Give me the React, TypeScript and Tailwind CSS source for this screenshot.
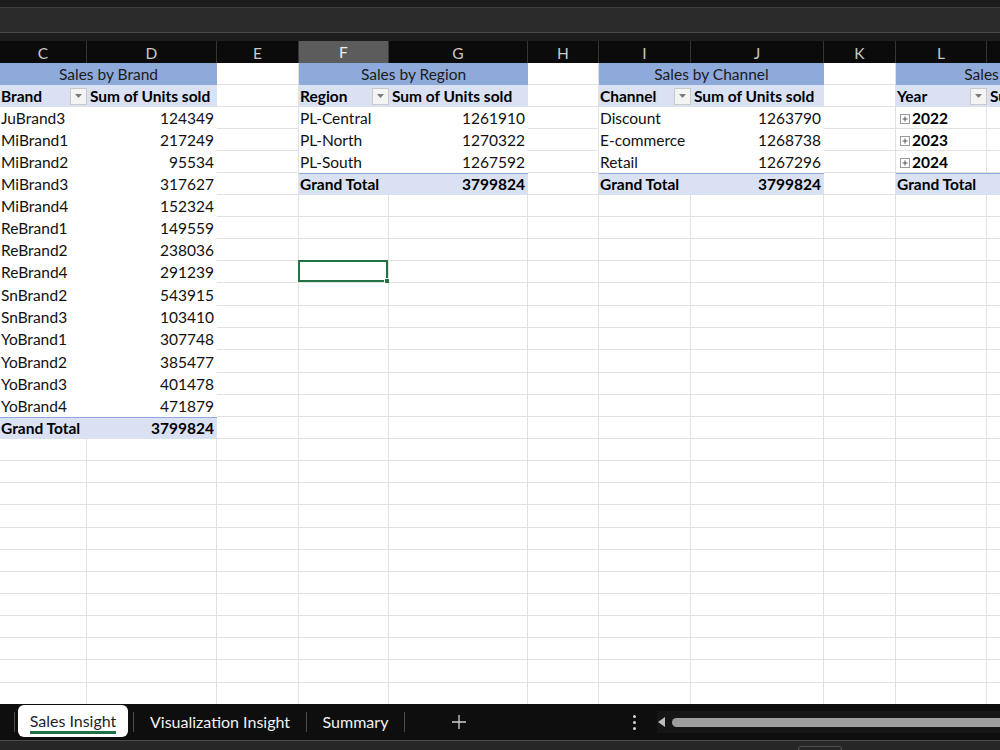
const COLS = ['C', 'D', 'E', 'F', 'G', 'H', 'I', 'J', 'K', 'L', 'M'];
const GRID = 'grid grid-cols-[87px_130px_82px_90px_139px_71px_92px_133px_72px_91px_133px]';
// Excel rounds row heights at this zoom, so a few rows are a pixel taller
const ROW_TRACKS =
  'grid-rows-[22px_22px_22px_22px_22px_22px_22px_22px_22px_22px_23px_22px_22px_23px_22px_22px_22px_22px_22px_22px_23px_22px_22px_22px_22px_22px_22px_23px_22px_22px]';
const ROWS = 30;

type Pivot = {
  col: number;
  title: string;
  head: string;
  rows: [string, string][];
  total: string;
  years?: boolean;
};

const PIVOTS: Pivot[] = [
  {
    col: 0,
    title: 'Sales by Brand',
    head: 'Brand',
    rows: [
      ['JuBrand3', '124349'],
      ['MiBrand1', '217249'],
      ['MiBrand2', '95534'],
      ['MiBrand3', '317627'],
      ['MiBrand4', '152324'],
      ['ReBrand1', '149559'],
      ['ReBrand2', '238036'],
      ['ReBrand4', '291239'],
      ['SnBrand2', '543915'],
      ['SnBrand3', '103410'],
      ['YoBrand1', '307748'],
      ['YoBrand2', '385477'],
      ['YoBrand3', '401478'],
      ['YoBrand4', '471879'],
    ],
    total: '3799824',
  },
  {
    col: 3,
    title: 'Sales by Region',
    head: 'Region',
    rows: [
      ['PL-Central', '1261910'],
      ['PL-North', '1270322'],
      ['PL-South', '1267592'],
    ],
    total: '3799824',
  },
  {
    col: 6,
    title: 'Sales by Channel',
    head: 'Channel',
    rows: [
      ['Discount', '1263790'],
      ['E-commerce', '1268738'],
      ['Retail', '1267296'],
    ],
    total: '3799824',
  },
  {
    col: 9,
    title: 'Sales by Year',
    head: 'Year',
    rows: [
      ['2022', ''],
      ['2023', ''],
      ['2024', ''],
    ],
    total: '',
    years: true,
  },
];

function FilterBtn() {
  return (
    <div className="w-[17px] h-[17px] -mt-[2px] border border-[#c9c9c9] bg-[#f4f4f4] flex items-center justify-center shrink-0">
      <svg width="7" height="4" viewBox="0 0 7 4">
        <path d="M0 0h7L3.5 4z" fill="#7b7b7b" />
      </svg>
    </div>
  );
}

function PlusBox() {
  return (
    <svg width="10" height="10" viewBox="0 0 10 10" className="mr-[2px] ml-[4px] shrink-0">
      <rect x="0.5" y="0.5" width="9" height="9" fill="#fff" stroke="#9a9a9a" />
      <path d="M2.5 5h5M5 2.5v5" stroke="#555" strokeWidth="1" />
    </svg>
  );
}

function pivotCells(p: Pivot, r: number) {
  const n = p.rows.length;
  if (r === 0) {
    return (
      <div key={`t${p.col}`} className="col-span-2 bg-[#8eaadb] flex items-center justify-center pt-[2px] text-[#1b1b1b] whitespace-nowrap">
        {p.title}
      </div>
    );
  }
  if (r === 1) {
    return [
      <div key={`h${p.col}`} className="bg-[#d9e1f2] flex items-center justify-between pl-[1px] pt-[2px] font-bold text-black">
        <span>{p.head}</span>
        <FilterBtn />
      </div>,
      <div key={`h2${p.col}`} className="bg-[#d9e1f2] flex items-center pl-[3px] pt-[2px] font-bold text-black whitespace-nowrap overflow-hidden">
        Sum of Units sold
      </div>,
    ];
  }
  if (r === n + 2) {
    return [
      <div key={`g${p.col}`} className="bg-[#d9e1f2] border-t border-[#8eaadb] flex items-center pl-[1px] font-bold text-black whitespace-nowrap">
        Grand Total
      </div>,
      <div key={`g2${p.col}`} className="bg-[#d9e1f2] border-t border-[#8eaadb] flex items-center justify-end pr-[3px] font-bold text-black">
        {p.total}
      </div>,
    ];
  }
  const [label, val] = p.rows[r - 2];
  if (p.years) {
    return [
      <div key={`d${p.col}`} className="bg-white border-b border-r border-[#e3e3e3] flex items-center pt-[2px] font-bold text-black">
        <PlusBox />
        {label}
      </div>,
      <div key={`d2${p.col}`} className="bg-white border-b border-[#e3e3e3] flex items-center justify-end pr-[3px] pt-[2px] text-black">
        {val}
      </div>,
    ];
  }
  return [
    <div key={`d${p.col}`} className="bg-white flex items-center pl-[1px] pt-[2px] text-[#111] whitespace-nowrap">
      {label}
    </div>,
    <div key={`d2${p.col}`} className="bg-white flex items-center justify-end pr-[3px] pt-[2px] text-[#111]">
      {val}
    </div>,
  ];
}

function SheetRow({ r }: { r: number }) {
  const cells: React.ReactNode[] = [];
  for (let c = 0; c < COLS.length; c++) {
    const p = PIVOTS.find(pv => (pv.col === c || pv.col + 1 === c) && r <= pv.rows.length + 2);
    if (p) {
      if (p.col === c) {
        const out = pivotCells(p, r);
        if (Array.isArray(out)) cells.push(...out);
        else cells.push(out);
      }
      continue;
    }
    const selected = r === 9 && c === 3;
    cells.push(
      <div key={c} className="relative bg-white border-r border-b border-[#e2e2e2]">
        {selected && (
          <div className="absolute -left-px -top-px right-0 bottom-0 border-2 border-[#217346]">
            <div className="absolute -right-[4px] -bottom-[4px] w-[6px] h-[6px] bg-[#217346] border border-white" />
          </div>
        )}
      </div>
    );
  }
  return <>{cells}</>;
}

export default function App() {
  return (
    <div className="w-[1000px] h-[750px] overflow-hidden flex flex-col bg-[#1b1b1b] font-['Lato',sans-serif] text-[15.5px]">
      {/* ribbon / formula bar remnants */}
      <div className="h-[7px] bg-[#1c1c1c] shrink-0" />
      <div className="h-px bg-[#3e3e3e] shrink-0" />
      <div className="h-[24px] bg-[#2a2a2a] shrink-0" />
      <div className="h-px bg-[#4a4a4a] shrink-0" />
      <div className="h-[8px] bg-[#1e1e1e] shrink-0" />

      {/* column letters */}
      <div className={`${GRID} h-[22px] bg-[#0b0b0b] shrink-0 overflow-hidden w-[1120px]`}>
        {COLS.map(l => (
          <div
            key={l}
            className={
              l === 'F'
                ? 'flex items-center justify-center bg-[#5c5c5c] text-[#eeeeee] border-r border-[#3a3a3a] border-b-2 border-b-[#3f9b63]'
                : 'flex items-center justify-center text-[#c9c9c9] border-r border-[#363636]'
            }
          >
            {l}
          </div>
        ))}
      </div>

      {/* cells */}
      <div className="flex-1 overflow-hidden bg-white">
        <div className={`${GRID} ${ROW_TRACKS} w-[1120px]`}>
          {Array.from({ length: ROWS }, (_, r) => (
            <SheetRow key={r} r={r} />
          ))}
        </div>
      </div>

      {/* sheet tabs */}
      <div className="h-[36px] bg-[#0e0e0e] shrink-0 flex items-center text-[16px]">
        <div className="ml-[14px] w-px h-[20px] bg-[#4b4b4b]" />
        <div className="ml-[3px] w-[110px] h-[32px] self-start mt-[1px] bg-white rounded-[6px] flex items-center justify-center">
          <span className="text-[#1f1f1f] border-b-[3px] border-[#1e7145] leading-[20px] pt-[2px] whitespace-nowrap">Sales Insight</span>
        </div>
        <div className="ml-[5px] w-px h-[20px] bg-[#4b4b4b]" />
        <div className="w-[172px] text-center text-[#f2f2f2] whitespace-nowrap">Visualization Insight</div>
        <div className="w-px h-[20px] bg-[#4b4b4b]" />
        <div className="w-[97px] text-center text-[#f2f2f2]">Summary</div>
        <div className="w-px h-[20px] bg-[#4b4b4b]" />
        <div className="w-[108px] flex justify-center">
          <svg width="14" height="14" viewBox="0 0 14 14">
            <path d="M7 0v14M0 7h14" stroke="#d0d0d0" strokeWidth="1.3" />
          </svg>
        </div>
        <div className="w-[115px]" />
        <div className="w-[12px] flex flex-col items-center gap-[3px]">
          <div className="w-[3px] h-[3px] rounded-full bg-[#d6d6d6]" />
          <div className="w-[3px] h-[3px] rounded-full bg-[#d6d6d6]" />
          <div className="w-[3px] h-[3px] rounded-full bg-[#d6d6d6]" />
        </div>
        <div className="ml-[17px] h-[22px] flex-1 bg-[#161616] flex items-center">
          <svg width="10" height="10" viewBox="0 0 10 10" className="shrink-0">
            <path d="M8 0v10L1 5z" fill="#bdbdbd" />
          </svg>
          <div className="ml-[5px] flex-1 h-[9px] rounded-l-full bg-[#9d9d9d]" />
        </div>
      </div>

      {/* status strip */}
      <div className="h-[10px] bg-[#262626] border-t border-[#4c4c4c] shrink-0 relative">
        <div className="absolute left-[798px] top-[5px] w-[44px] h-[8px] rounded-t-[3px] border border-[#505050]" />
      </div>
    </div>
  );
}
